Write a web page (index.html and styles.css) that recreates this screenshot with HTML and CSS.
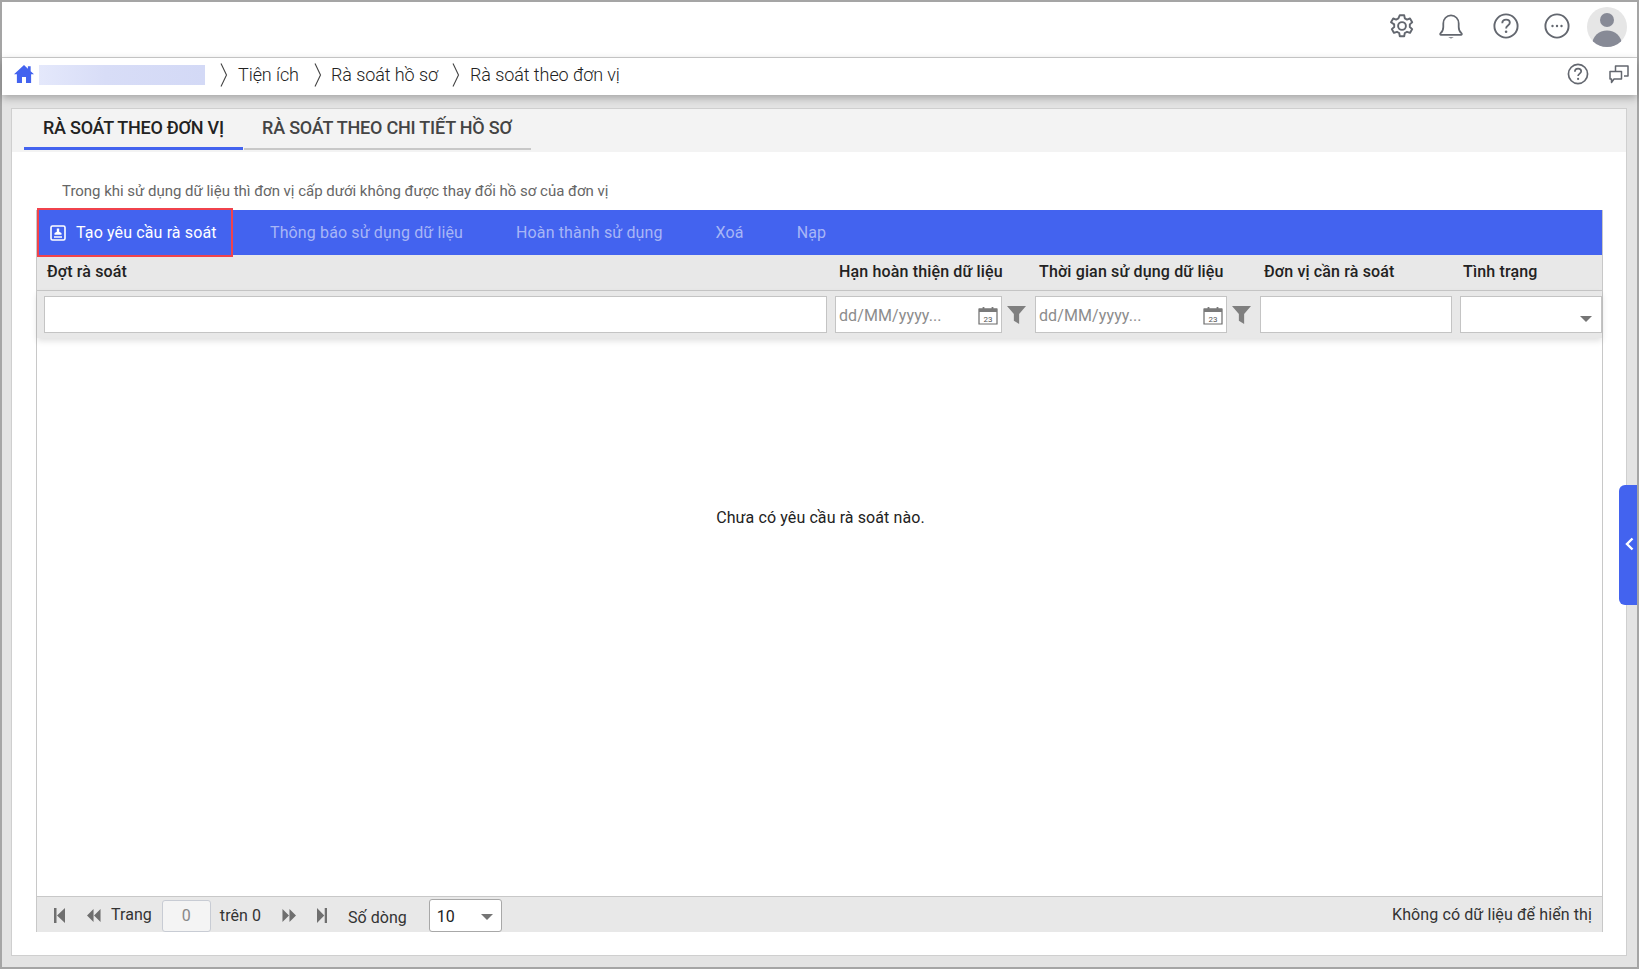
FILE: index.html
```html
<!DOCTYPE html>
<html lang="vi">
<head>
<meta charset="utf-8">
<title>Rà soát theo đơn vị</title>
<link rel="stylesheet" href="styles.css">
</head>
<body>
<div class="app">
  <header class="topbar">
    <svg class="ti gear" viewBox="0 0 26 26"><g fill="none" stroke="#63676f" stroke-width="1.9" stroke-linejoin="round"><path d="M10.8 2.2h4.4l.6 3.2 2.2 1.2 3-1.1 2.2 3.8-2.4 2.1v2.6l2.400 2.100-2.200 3.800-3-1.100-2.200 1.200-.6 3.200h-4.400l-.6-3.200-2.200-1.200-3 1.100-2.200-3.800 2.400-2.100v-2.600L2 9.300l2.200-3.800 3 1.100 2.200-1.200z"/><circle cx="13" cy="13" r="3.900"/></g></svg>
    <svg class="ti bell" viewBox="0 0 26 28"><path d="M1.600 22c2.200-1.800 3.100-3.800 3.100-7V11.200C4.700 6.400 8.200 2.600 13 2.600s8.300 3.800 8.300 8.600V15c0 3.200.9 5.200 3.100 7 .6.600.2 1.500-.6 1.500H2.200c-.8 0-1.200-.9-.6-1.500z" fill="none" stroke="#63676f" stroke-width="1.900" stroke-linejoin="round"/><path d="M10 26.200h6l-3 1.300z" fill="#63676f"/></svg>
    <svg class="ti help" viewBox="0 0 26 26"><circle cx="13" cy="13" r="11.600" fill="none" stroke="#63676f" stroke-width="1.900"/><path d="M9.300 10.300c0-2.300 1.700-3.700 3.800-3.700s3.700 1.300 3.700 3.200c0 2.800-3.700 2.800-3.700 5.600" fill="none" stroke="#63676f" stroke-width="1.900"/><circle cx="13.100" cy="18.800" r="1.300" fill="#63676f"/></svg>
    <svg class="ti dots" viewBox="0 0 26 26"><circle cx="13" cy="13" r="11.600" fill="none" stroke="#63676f" stroke-width="1.900"/><circle cx="8.500" cy="13" r="1.200" fill="#63676f"/><circle cx="13" cy="13" r="1.200" fill="#63676f"/><circle cx="17.500" cy="13" r="1.200" fill="#63676f"/></svg>
    <svg class="avatar" viewBox="0 0 40 40"><defs><clipPath id="avc"><circle cx="20" cy="20" r="20"/></clipPath></defs><circle cx="20" cy="20" r="20" fill="#e6e6e6"/><g clip-path="url(#avc)"><circle cx="20" cy="13" r="7" fill="#878a96"/><path d="M5 39c0-10 7-15.500 15-15.500S35 29 35 39v1H5z" fill="#878a96"/></g></svg>
  </header>

  <nav class="crumbs">
    <svg class="home" viewBox="0 0 18 16"><path d="M9 0 0 8.300h2.600V16h4.600v-5.300h3.600V16h4.600V8.300H18l-3-2.800V1h-2.500v2.200z" fill="#4363ef"/></svg>
    <span class="blurred"></span>
    <svg class="sep s1" viewBox="0 0 8 24"><path d="M1 .500 6.500 12 1 23.500" fill="none" stroke="#444" stroke-width="1.100"/></svg>
    <span class="crumb">Tiện ích</span>
    <svg class="sep s2" viewBox="0 0 8 24"><path d="M1 .500 6.500 12 1 23.500" fill="none" stroke="#444" stroke-width="1.100"/></svg>
    <span class="crumb">Rà soát hồ sơ</span>
    <svg class="sep s3" viewBox="0 0 8 24"><path d="M1 .500 6.500 12 1 23.500" fill="none" stroke="#444" stroke-width="1.100"/></svg>
    <span class="crumb">Rà soát theo đơn vị</span>
    <span class="crumb-tools">
      <svg class="ci" viewBox="0 0 26 26"><circle cx="13" cy="13" r="11.300" fill="none" stroke="#63676f" stroke-width="2"/><path d="M9.300 10.300c0-2.300 1.700-3.700 3.800-3.700s3.700 1.300 3.700 3.200c0 2.800-3.700 2.800-3.700 5.600" fill="none" stroke="#63676f" stroke-width="2"/><circle cx="13.100" cy="18.800" r="1.300" fill="#63676f"/></svg>
      <svg class="chat" viewBox="0 0 20 19"><path d="M6.500 6V1h12.500v10h-4M1 6.500h11.500v7.500H5l-2.500 3.500V14H1z" fill="none" stroke="#63676f" stroke-width="1.500" stroke-linejoin="round"/></svg>
    </span>
  </nav>

  <main class="stage">
    <section class="panel">
      <div class="tabs">
        <div class="tab active">RÀ SOÁT THEO ĐƠN VỊ</div>
        <div class="tab">RÀ SOÁT THEO CHI TIẾT HỒ SƠ</div>
      </div>
      <p class="note">Trong khi sử dụng dữ liệu thì đơn vị cấp dưới không được thay đổi hồ sơ của đơn vị</p>

      <div class="grid-box">
        <div class="toolbar">
          <button class="tool primary">
            <svg class="tool-ic" viewBox="0 0 16 16"><rect x="1" y="1" width="14" height="14" rx="1.500" fill="none" stroke="#fff" stroke-width="1.600"/><path d="M6.800 3.500h2.400v3.200l2.300 1.300v1.800h-7V8l2.300-1.300zM4 11.300h8v1.400H4z" fill="#fff"/></svg>
            Tạo yêu cầu rà soát
          </button>
          <button class="tool t2">Thông báo sử dụng dữ liệu</button>
          <button class="tool t3">Hoàn thành sử dụng</button>
          <button class="tool t4">Xoá</button>
          <button class="tool t5">Nạp</button>
        </div>

        <div class="row head">
          <div class="h h1">Đợt rà soát</div>
          <div class="h">Hạn hoàn thiện dữ liệu</div>
          <div class="h">Thời gian sử dụng dữ liệu</div>
          <div class="h">Đơn vị cần rà soát</div>
          <div class="h h5">Tình trạng</div>
        </div>

        <div class="row filters">
          <div class="f f1"><div class="input"></div></div>
          <div class="f">
            <div class="input date d1"><span class="ph">dd/MM/yyyy...</span>
              <svg class="cal" viewBox="0 0 20 19"><path d="M1 3h18v15H1z" fill="#fff" stroke="#6c6c6c" stroke-width="1.200"/><path d="M1 2.500h18V6H1z" fill="#7a7a7a"/><path d="M5.500 1v3M14.500 1v3" stroke="#7a7a7a" stroke-width="1.800"/><text x="10" y="15.500" text-anchor="middle" class="cal-t">23</text></svg>
            </div>
            <svg class="funnel" viewBox="0 0 18 17"><path d="M0 0h18l-6.500 7.500V17L6.500 14V7.500z" fill="#7f7f7f"/></svg>
          </div>
          <div class="f">
            <div class="input date d2"><span class="ph">dd/MM/yyyy...</span>
              <svg class="cal" viewBox="0 0 20 19"><path d="M1 3h18v15H1z" fill="#fff" stroke="#6c6c6c" stroke-width="1.200"/><path d="M1 2.500h18V6H1z" fill="#7a7a7a"/><path d="M5.500 1v3M14.500 1v3" stroke="#7a7a7a" stroke-width="1.800"/><text x="10" y="15.500" text-anchor="middle" class="cal-t">23</text></svg>
            </div>
            <svg class="funnel" viewBox="0 0 18 17"><path d="M0 0h18l-6.500 7.500V17L6.500 14V7.500z" fill="#7f7f7f"/></svg>
          </div>
          <div class="f"><div class="input d3"></div></div>
          <div class="f"><div class="input d4"><span class="caret"></span></div></div>
        </div>

        <div class="body">
          <span class="empty">Chưa có yêu cầu rà soát nào.</span>
        </div>

        <footer class="pager">
          <svg class="pg1" viewBox="0 0 11 13" preserveAspectRatio="none"><path d="M0 0h2.500v13H0zM11 0v13L3 6.500z" fill="#6f6f6f"/></svg>
          <svg class="pg2" viewBox="0 0 15 13" preserveAspectRatio="none"><path d="M7 0v13L0 6.500zM14.500 0v13l-7-6.500z" fill="#6f6f6f"/></svg>
          <span class="pt trang">Trang</span>
          <span class="page-input">0</span>
          <span class="pt tren">trên 0</span>
          <svg class="pg3" viewBox="0 0 15 13" preserveAspectRatio="none"><path d="M.5 0v13l7-6.500zM8 0v13l7-6.500z" fill="#6f6f6f"/></svg>
          <svg class="pg4" viewBox="0 0 11 13" preserveAspectRatio="none"><path d="M0 0v13l8-6.500zM8.500 0H11v13H8.500z" fill="#6f6f6f"/></svg>
          <span class="pt sodong">Số dòng</span>
          <span class="size">10<span class="caret small"></span></span>
          <span class="pt info">Không có dữ liệu để hiển thị</span>
        </footer>
      </div>
    </section>
    <div class="handle"><svg viewBox="0 0 9 14"><path d="M7.500 1.500 2 7l5.500 5.500" fill="none" stroke="#fff" stroke-width="2.400"/></svg></div>
  </main>
</div>
</body>
</html>
```
FILE: styles.css
```css
* { box-sizing: border-box; }
html, body { margin: 0; padding: 0; height: 100%; overflow: hidden; }
body { font-family: Roboto, "Liberation Sans", sans-serif; color: #222; background: #fff; }

.app {
  width: 1639px; height: 969px;
  border: 2px solid #a5a5a5;
  display: flex; flex-direction: column;
  background: #e3e3e3;
}

.topbar {
  height: 56px; flex: none;
  background: #fff;
  border-bottom: 1px solid #cfcfcf;
  display: flex; align-items: flex-start; justify-content: flex-end;
  padding: 11px 10px 0 0;
}
.ti { width: 26px; height: 26px; flex: none; }
.bell { margin-left: 23px; }
.help { margin-left: 29px; }
.dots { margin-left: 25px; }
.avatar { width: 40px; height: 40px; flex: none; margin: -6px 0 0 17px; }

.crumbs {
  height: 37px; flex: none;
  background: #fff;
  display: flex; align-items: center;
  padding: 0 0 4px 12px;
  box-shadow: 0 3px 8px rgba(0,0,0,.28);
  position: relative;
  font-size: 18px; font-weight: 300; color: #222; letter-spacing: -.08px;
}
.home { width: 20px; height: 18px; margin-top: -2px; flex: none; }
.blurred {
  width: 166px; height: 20px; margin-left: 5px; margin-top: 1px; flex: none;
  background: linear-gradient(90deg, #e4e8fb, #d8ddf7 40%, #d3d9f6);
}
.sep { width: 8px; height: 24px; flex: none; }
.s1 { margin: 0 10px 0 15px; }
.s2 { margin: 0 9px 0 15px; }
.s3 { margin: 0 10px 0 14px; }
.crumb { white-space: nowrap; }
.crumb-tools { margin-left: auto; display: flex; align-items: center; gap: 20px; padding-right: 8px; }
.ci { width: 22px; height: 22px; margin-top: -2px; }
.chat { width: 20px; height: 19px; margin-top: 0; }

.stage { flex: 1; position: relative; padding: 13px 10px 11px 9px; min-height: 0; }
.panel {
  height: 100%;
  background: #fff;
  border: 1px solid #cfcfcf;
  display: flex; flex-direction: column;
}

.tabs { height: 43px; flex: none; background: #f3f3f3; display: flex; padding-left: 12px; }
.tab {
  width: 287px; height: 41px;
  border-bottom: 2px solid #c8c8c8;
  font-size: 18px; font-weight: 500; color: #444;
  padding: 8px 0 0 18px;
  white-space: nowrap;
  letter-spacing: -.2px;
}
.tab.active { width: 219px; margin-right: 1px; color: #222; border-bottom: 3px solid #4363ef; padding-left: 19px; letter-spacing: -.25px; }

.note { margin: 29px 0 0 50px; height: 20px; font-size: 15px; line-height: 20px; color: #666; flex: none; letter-spacing: -.02px; }

.grid-box { margin: 9px 0 23px 24px; width: 1567px; flex: 1; min-height: 0; display: flex; flex-direction: column; border-left: 1px solid #c8c8c8; border-right: 1px solid #c8c8c8; }

.toolbar { height: 45px; flex: none; background: #4363ef; display: flex; align-items: center; position: relative; }
.tool {
  border: 0; background: none; padding: 0; font: inherit; font-size: 16px; letter-spacing: .13px;
  color: #a8b6f6; white-space: nowrap; margin-top: -1px;
}
.tool.primary {
  width: 196px; height: 49px; margin: -2px 0; flex: none;
  border: 2px solid #f0424c;
  color: #fff;
  display: flex; align-items: center;
  padding-left: 11px;
  gap: 10px;
}
.tool-ic { width: 16px; height: 16px; flex: none; }
.t2 { margin-left: 37px; }
.t3 { margin-left: 53px; }
.t4 { margin-left: 53px; }
.t5 { margin-left: 53px; }

.row { display: grid; grid-template-columns: 794px 200px 225px 200px 1fr; flex: none; }
.head { height: 36px; background: #e8e8e8; border-bottom: 1px solid #c8c8c8; align-items: center; }
.h { font-size: 16px; font-weight: 500; color: #222; padding-left: 8px; letter-spacing: .15px; white-space: nowrap; padding-bottom: 3px; }
.h1 { padding-left: 10px; }
.h5 { padding-left: 7px; }

.filters { height: 47px; background: #e8e8e8; box-shadow: 0 3px 6px rgba(0,0,0,.12); position: relative; }
.f { padding: 5px 0 0 4px; display: flex; align-items: flex-start; }
.f1 { padding-left: 7px; }
.input {
  height: 37px; width: 783px; flex: none;
  background: #fff; border: 1px solid #c4c4c4;
  position: relative;
  display: flex; align-items: center;
  padding: 2px 3px 0;
}
.d1 { width: 167px; }
.d2 { width: 192px; }
.d3 { width: 192px; }
.d4 { width: 142px; }
.ph { font-size: 16px; color: #8c8c8c; letter-spacing: .1px; }
.cal { width: 20px; height: 19px; position: absolute; right: 3px; top: 9px; }
.cal-t { font: 8px Roboto, sans-serif; fill: #555; }
.funnel { width: 19px; height: 18px; margin: 10px 0 0 5px; flex: none; }
.caret {
  position: absolute; right: 9px; top: 19px;
  border-left: 6px solid transparent; border-right: 6px solid transparent; border-top: 6px solid #757575;
}

.body { flex: 1; min-height: 0; background: #fff; display: flex; justify-content: center; align-items: flex-start; padding: 170px 0 0 2px; }
.empty { font-size: 16px; line-height: 19px; color: #222; letter-spacing: .1px; }

.pager {
  height: 36px; flex: none;
  background: #e8e8e8; border-top: 1px solid #c8c8c8;
  display: flex; align-items: center;
  position: relative;
}
.pg1 { width: 11px; height: 15px; margin: 2px 0 0 17px; flex: none; }
.pg2 { width: 14px; height: 13px; margin: 2px 0 0 22px; flex: none; }
.pt { font-size: 16px; color: #333; white-space: nowrap; letter-spacing: .05px; }
.trang { margin-left: 10px; margin-top: 0; }
.page-input {
  width: 49px; height: 32px; margin-left: 10px; flex: none;
  background: #f4f4f4; border: 1px solid #c8ccd4; border-radius: 3px;
  display: flex; align-items: center; justify-content: center;
  font-size: 16px; color: #888;
  margin-top: 2px;
}
.tren { margin-left: 9px; margin-top: 1px; }
.pg3 { width: 14px; height: 13px; margin: 2px 0 0 21px; flex: none; }
.pg4 { width: 10px; height: 15px; margin: 2px 0 0 21px; flex: none; }
.sodong { margin-left: 21px; margin-top: 5px; }
.size {
  width: 73px; height: 33px; margin-left: 22px; flex: none;
  background: #fff; border: 1px solid #a8a8a8; border-radius: 3px;
  font-size: 16px; color: #222; padding: 2px 0 0 7px;
  display: flex; align-items: center;
  position: relative; margin-top: 2px;
}
.caret.small { top: 14px; right: 8px; }
.info { margin-left: auto; padding-right: 10px; margin-top: 0; letter-spacing: .1px; }

.handle {
  position: absolute; right: 0; top: 390px;
  width: 18px; height: 120px;
  background: #4363ef; border-radius: 6px 0 0 6px;
  display: flex; align-items: center; justify-content: center;
  padding: 0 0 2px 2px;
}
.handle svg { width: 9px; height: 14px; }
```
